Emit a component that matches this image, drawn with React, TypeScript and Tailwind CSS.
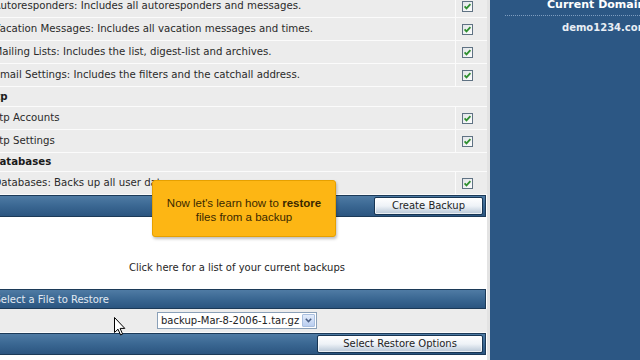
import React from "react";

type Row = { t: string; h?: boolean };

const rows: Row[] = [
  { t: "Autoresponders: Includes all autoresponders and messages." },
  { t: "Vacation Messages: Includes all vacation messages and times." },
  { t: "Mailing Lists: Includes the list, digest-list and archives." },
  { t: "Email Settings: Includes the filters and the catchall address." },
  { t: "Ftp", h: true },
  { t: "Ftp Accounts" },
  { t: "Ftp Settings" },
  { t: "Databases", h: true },
  { t: "Databases: Backs up all user data." },
];

function Check() {
  return (
    <svg width="11" height="11" viewBox="0 0 11 11">
      <defs>
        <linearGradient id="cbg" x1="0" y1="0" x2="1" y2="1">
          <stop offset="0" stopColor="#dfe3e6" />
          <stop offset="1" stopColor="#ffffff" />
        </linearGradient>
      </defs>
      <rect x="0.5" y="0.5" width="10" height="10" fill="url(#cbg)" stroke="#5f7283" />
      <path d="M2.6 5.4 L4.5 7.4 L8.4 3.2" fill="none" stroke="#2f8f2f" strokeWidth="1.8" />
    </svg>
  );
}

function Btn({ label, w }: { label: string; w: string }) {
  return (
    <div
      className={`${w} h-[18px] flex items-center justify-center rounded-[2px] border border-[#173553] bg-linear-to-b from-white via-[#eef2f7] to-[#b7c6d6] text-[10px] leading-[12px] text-[#1e1e1e] shadow-[inset_0_0_0_1px_rgba(255,255,255,0.7)] whitespace-nowrap`}
    >
      {label}
    </div>
  );
}

export default function App() {
  return (
    <div className="relative w-[640px] h-[360px] overflow-hidden bg-white flex font-['DejaVu_Sans',sans-serif]">
      {/* main panel */}
      <div className="w-[500px] shrink-0 ml-[-13px] mt-[-5px] flex flex-col">
        {rows.map((r, i) =>
          r.h ? (
            <div
              key={i}
              className={`${i === 4 ? "h-[20px] pl-[1.5px]" : "h-[19px] pl-[4px]"} border-b border-[#fbfbfb] bg-[#ececec] flex items-center text-[10.2px] font-bold text-[#1a1a1a] whitespace-nowrap`}
            >
              {r.t}
            </div>
          ) : (
            <div key={i} className="h-[23px] border-b border-[#fbfbfb] flex">
              <div className="flex-1 bg-[#ececec] pl-[6.5px] flex items-center text-[10.2px] text-[#2a2a2a] whitespace-nowrap">
                {r.t}
              </div>
              <div className="w-[32px] bg-[#ececec] border-l border-[#fbfbfb] flex items-center pl-[6px]">
                <Check />
              </div>
            </div>
          )
        )}
        {/* bar 1 */}
        <div className="h-[22px] border border-[#1c3a58] bg-linear-to-b from-[#4f7ba4] via-[#3a6792] to-[#2b5580] flex items-center justify-end pr-[2px] mr-[1px]">
          <Btn label="Create Backup" w="w-[109px]" />
        </div>
        {/* white area */}
        <div className="h-[72px] bg-white pt-[44px] text-center text-[10px] leading-[13px] text-[#262626] whitespace-nowrap">
          Click here for a list of your current backups
        </div>
        {/* bar 2 */}
        <div className="h-[20px] border border-[#1c3a58] bg-linear-to-b from-[#4f7ba4] via-[#3a6792] to-[#2b5580] flex items-center pl-[6.5px] text-[10px] text-[#e3eaf2] whitespace-nowrap mr-[1px]">
          Select a File to Restore
        </div>
        {/* select row */}
        <div className="h-[24px] bg-[#ececec] flex items-center justify-center border-b border-[#fbfbfb]">
          <div className="w-[160px] h-[17px] bg-white border border-[#8aa0b8] flex items-center">
            <div className="flex-1 pl-[3px] text-[10px] leading-[12px] text-[#222] whitespace-nowrap overflow-hidden">
              backup-Mar-8-2006-1.tar.gz
            </div>
            <div className="w-[13px] h-[13px] mr-[1px] rounded-[1px] border border-[#a9bfdf] bg-linear-to-b from-[#e3ecfb] to-[#b9cdef] flex items-center justify-center">
              <svg width="7" height="5" viewBox="0 0 7 5">
                <path d="M0.8 0.8 L3.5 3.6 L6.2 0.8" fill="none" stroke="#4a5f86" strokeWidth="1.5" />
              </svg>
            </div>
          </div>
        </div>
        {/* bar 3 */}
        <div className="h-[22px] border border-[#1c3a58] bg-linear-to-b from-[#4f7ba4] via-[#3a6792] to-[#2b5580] flex items-center justify-end pr-[2px] mr-[1px]">
          <Btn label="Select Restore Options" w="w-[166px]" />
        </div>
        <div className="flex-1 bg-white" />
      </div>
      {/* divider */}
      <div className="w-[3px] shrink-0 bg-[#e3e3e3]" />
      {/* sidebar */}
      <div className="flex-1 bg-[#2c5784] overflow-hidden">
        <div className="h-[13px] mt-[-2px] pl-[57px] text-[11px] leading-[13px] font-bold text-white whitespace-nowrap">
          Current Domain
        </div>
        <div className="mt-[4px] ml-[15px] border-t border-dotted border-[#7f9dbf]" />
        <div className="mt-[6px] pl-[72px] text-[10px] leading-[12px] font-bold text-[#e8eef5] whitespace-nowrap">
          demo1234.com
        </div>
      </div>

      {/* tooltip */}
      <div className="absolute left-[152px] top-[180px] w-[184px] h-[57px] rounded-[3px] bg-[#fdb614] border border-[#e6a000] shadow-[1px_2px_3px_rgba(0,0,0,0.25)] pt-[15px] text-center font-['Liberation_Sans',Arial,sans-serif] text-[11.5px] leading-[14px] text-[#3a2800]">
        <div className="whitespace-nowrap">
          Now let's learn how to <b>restore</b>
        </div>
        <div className="whitespace-nowrap">files from a backup</div>
      </div>

      {/* cursor */}
      <svg className="absolute left-[114px] top-[317px]" width="12" height="19" viewBox="0 0 12 19">
        <path d="M0.5 0.5 L0.5 15.5 L4 12.2 L6.6 18 L8.6 17.1 L6.1 11.4 L10.8 11.4 Z" fill="#fff" stroke="#000" strokeWidth="1" />
      </svg>
    </div>
  );
}
